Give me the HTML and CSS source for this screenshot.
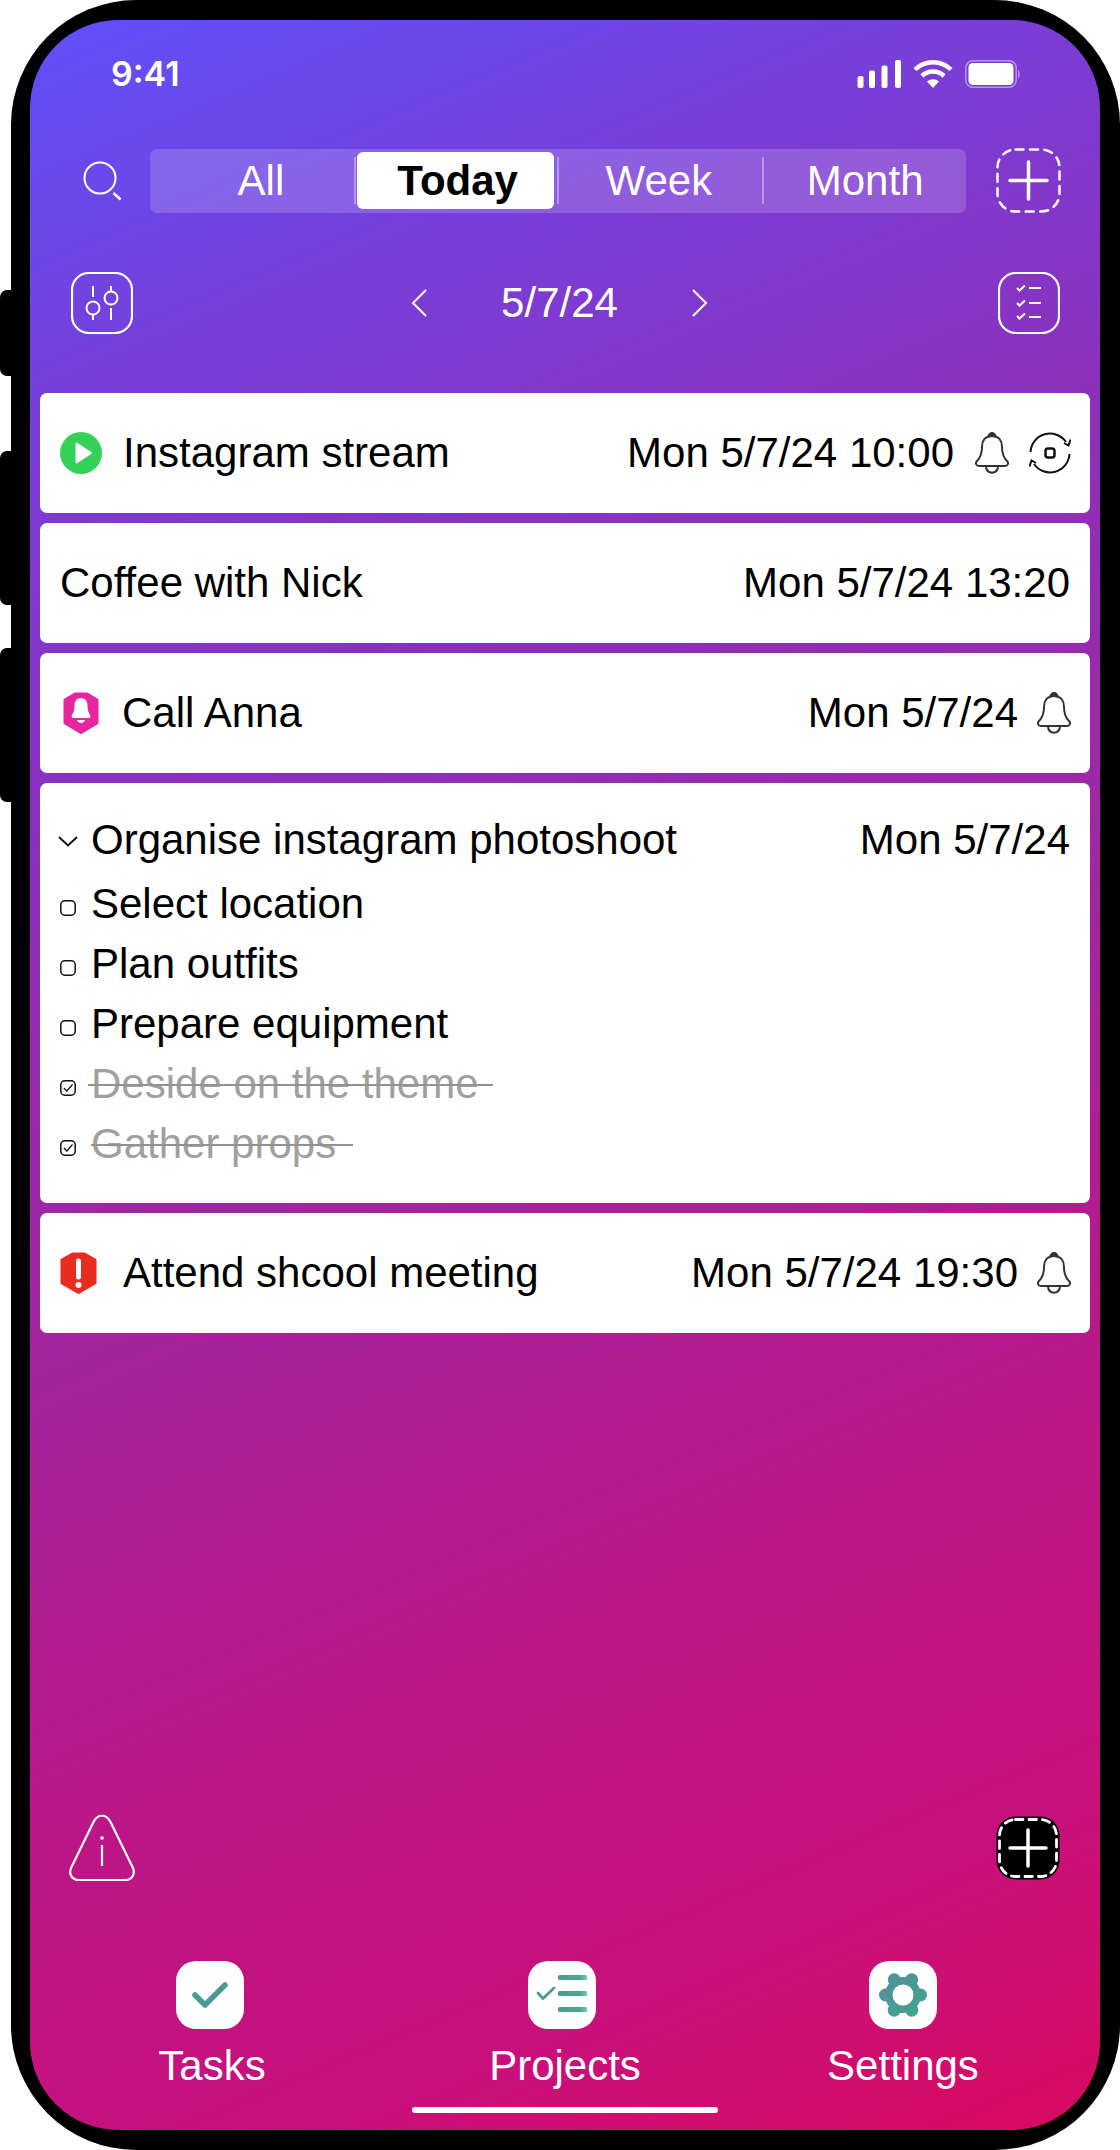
FILE: index.html
```html
<!DOCTYPE html>
<html lang="en">
<head>
  <meta charset="UTF-8" />
  <title>Tasks</title>
  <link rel="stylesheet" href="styles.css">
</head>
<body>
  <svg class="defs" width="0" height="0">
    <defs>
      <symbol id="bell" viewBox="0 0 34 42">
        <path d="M17 4C10 4 7 9 7 15C7 23 5 26 2 29C0 31 1 34 4 34H30C33 34 34 31 32 29C29 26 27 23 27 15C27 9 24 4 17 4Z" fill="none" stroke="#333" stroke-width="2"/>
        <path d="M11.5 6C13 1.500 15 0 17 0C19 0 21 1.500 22.500 6C20 4.500 14 4.500 11.500 6Z" fill="#333"/>
        <path d="M11 35C12 42.500 22 42.500 23 35" fill="none" stroke="#333" stroke-width="2"/>
      </symbol>
      <symbol id="box" viewBox="0 0 16 16">
        <rect x="0.8" y="0.8" width="14.4" height="14.4" rx="4" fill="#fff" stroke="#111" stroke-width="1.5"/>
      </symbol>
      <symbol id="box-done" viewBox="0 0 16 16">
        <rect x="0.8" y="0.8" width="14.4" height="14.4" rx="4" fill="#fff" stroke="#111" stroke-width="1.5"/>
        <path d="M3.800 8L6.800 11L12.500 4.500" fill="none" stroke="#111" stroke-width="1.200"/>
      </symbol>
    </defs>
  </svg>

  <span class="side-btn side-btn-a"></span>
  <span class="side-btn side-btn-b"></span>
  <span class="side-btn side-btn-c"></span>

  <div class="phone">
    <div class="screen">

      <div class="status">
        <span class="time">9:41</span>
        <div class="status-icons">
          <svg width="44" height="28" viewBox="0 0 44 28" fill="#fff">
            <rect x="0.500" y="16" width="6" height="12" rx="2"/>
            <rect x="12" y="10.500" width="6" height="17.500" rx="2"/>
            <rect x="24.500" y="5.500" width="6" height="22.500" rx="2"/>
            <rect x="38" y="0" width="6" height="28" rx="2"/>
          </svg>
          <svg width="40" height="28" viewBox="0 0 40 28">
            <path d="M2 9.500A26 26 0 0 1 38 9.500" fill="none" stroke="#fff" stroke-width="4.500"/>
            <path d="M9 16A16 16 0 0 1 31 16" fill="none" stroke="#fff" stroke-width="4.500"/>
            <path d="M14 21.500A9 9 0 0 1 26 21.500L20 28Z" fill="#fff"/>
          </svg>
          <svg width="56" height="28" viewBox="0 0 56 28">
            <rect x="0.800" y="0.800" width="50.400" height="26.400" rx="7" fill="none" stroke="#fff" stroke-opacity="0.45" stroke-width="1.500"/>
            <rect x="3.500" y="3" width="45" height="22" rx="4.500" fill="#fff"/>
            <path d="M53 10C55 11 55.500 17 53 18Z" fill="#fff" fill-opacity="0.45"/>
          </svg>
        </div>
      </div>

      <div class="toolbar">
        <svg class="search-icon" width="40" height="40" viewBox="0 0 40 40" fill="none" stroke="#fff">
          <circle cx="17" cy="17" r="15.500" stroke-width="2"/>
          <path d="M30.500 32L37.500 38.500" stroke-width="2.500"/>
        </svg>
        <div class="segments">
          <span class="segment segment-all">All</span>
          <i class="seg-divider"></i>
          <span class="segment segment-today">Today</span>
          <i class="seg-divider"></i>
          <span class="segment segment-week">Week</span>
          <i class="seg-divider"></i>
          <span class="segment segment-month">Month</span>
        </div>
        <svg class="add-icon" width="65" height="65" viewBox="0 0 65 65" fill="none" stroke="#fff" stroke-linecap="round">
          <rect x="1.500" y="1.500" width="62" height="62" rx="18" stroke-width="2.500" stroke-dasharray="8 6.500"/>
          <path d="M32.500 14V51M14 32.500H51" stroke-width="3.500"/>
        </svg>
      </div>

      <div class="datebar">
        <svg width="62" height="62" viewBox="0 0 62 62" fill="none" stroke="#fff" stroke-width="2">
          <rect x="1" y="1" width="60" height="60" rx="17" stroke-width="2.200"/>
          <path d="M22 14V25M22 43V48M40 14V19M40 36V48"/>
          <circle cx="22" cy="36" r="6.500"/>
          <circle cx="40" cy="26" r="6.500"/>
        </svg>
        <div class="date-nav">
          <svg width="16" height="28" viewBox="0 0 16 28" fill="none" stroke="#fff" stroke-width="2"><path d="M15 1L2 14L15 27"/></svg>
          <span class="date">5/7/24</span>
          <svg width="16" height="28" viewBox="0 0 16 28" fill="none" stroke="#fff" stroke-width="2"><path d="M1 1L14 14L1 27"/></svg>
        </div>
        <svg width="62" height="62" viewBox="0 0 62 62" fill="none" stroke="#fff" stroke-width="2">
          <rect x="1" y="1" width="60" height="60" rx="17" stroke-width="2.200"/>
          <path d="M19 16L21.500 18.500L27 13.500M19 31L21.500 33.500L27 28.500M19 44L21.500 46.500L27 41.500"/>
          <path d="M31 16H43M31 31H43M31 45H43"/>
        </svg>
      </div>

      <div class="list">
        <div class="card">
          <svg class="lead-icon lead-play" width="42" height="42" viewBox="0 0 42 42">
            <circle cx="21" cy="21" r="21" fill="#34d158"/>
            <path d="M16.500 11.500L31 21L16.500 30.500Z" fill="#fff" stroke="#fff" stroke-width="2" stroke-linejoin="round"/>
          </svg>
          <span class="title">Instagram stream</span>
          <span class="when">Mon 5/7/24 10:00</span>
          <svg class="bell" width="34" height="42"><use href="#bell"/></svg>
          <svg class="repeat" width="42" height="42" viewBox="0 0 42 42" fill="none" stroke="#111" stroke-width="2">
            <path d="M1.500 20A19.500 19.500 0 0 1 37 10"/>
            <path d="M41.500 7.500L39.500 13.500L35 11"/>
            <path d="M40.500 22A19.500 19.500 0 0 1 5 32"/>
            <path d="M0.500 34.500L2.500 28.500L7 31"/>
            <rect x="16.500" y="16.500" width="9" height="9" rx="2.500" stroke-width="2.500"/>
          </svg>
        </div>

        <div class="card">
          <span class="title">Coffee with Nick</span>
          <span class="when">Mon 5/7/24 13:20</span>
        </div>

        <div class="card">
          <svg class="lead-icon lead-hex" width="36" height="42" viewBox="0 0 36 42">
            <path d="M12 2H24L34 8V31L18 40.500L2 31V8Z" fill="#e6259f" stroke="#e6259f" stroke-width="3" stroke-linejoin="round"/>
            <path d="M18 6C13 6 11.500 10 11.500 14C11.500 19 10 21 9 23C8 25 9 26 11 26H25C27 26 28 25 27 23C26 21 24.500 19 24.500 14C24.500 10 23 6 18 6Z" fill="#fff"/>
            <path d="M14 28H22C21 32 15 32 14 28Z" fill="#fff"/>
          </svg>
          <span class="title">Call Anna</span>
          <span class="when">Mon 5/7/24</span>
          <svg class="bell" width="34" height="42"><use href="#bell"/></svg>
        </div>

        <div class="card card-project">
          <div class="project-head">
            <svg class="chevron" width="20" height="11" viewBox="0 0 20 11" fill="none" stroke="#111" stroke-width="1.800"><path d="M1 1L10 9.500L19 1"/></svg>
            <span class="title">Organise instagram photoshoot</span>
            <span class="when">Mon 5/7/24</span>
          </div>
          <div class="subtask"><svg width="16" height="16"><use href="#box"/></svg><span>Select location</span></div>
          <div class="subtask"><svg width="16" height="16"><use href="#box"/></svg><span>Plan outfits</span></div>
          <div class="subtask"><svg width="16" height="16"><use href="#box"/></svg><span>Prepare equipment</span></div>
          <div class="subtask done"><svg width="16" height="16"><use href="#box-done"/></svg><span class="strike strike-a">Deside on the theme</span></div>
          <div class="subtask done"><svg width="16" height="16"><use href="#box-done"/></svg><span class="strike strike-b">Gather props</span></div>
        </div>

        <div class="card">
          <svg class="lead-icon lead-alert" width="37" height="42" viewBox="0 0 37 42">
            <path d="M12.500 2H24.500L35 8V31L18.500 40.500L2 31V8Z" fill="#ea2b1f" stroke="#ea2b1f" stroke-width="3" stroke-linejoin="round"/>
            <path d="M18.500 9V25" stroke="#fff" stroke-width="5" stroke-linecap="round"/>
            <circle cx="18.500" cy="33" r="3" fill="#fff"/>
          </svg>
          <span class="title">Attend shcool meeting</span>
          <span class="when">Mon 5/7/24 19:30</span>
          <svg class="bell" width="34" height="42"><use href="#bell"/></svg>
        </div>
      </div>

      <div class="actions">
        <svg width="68" height="68" viewBox="0 0 68 68" fill="none" stroke="#fff" stroke-width="2.200">
          <path d="M26 7C30 0 38 0 42 7L64.500 53C68 60 64 66 57 66H11C4 66 0 60 3.500 53Z"/>
          <path d="M34 31V52"/>
          <circle cx="34" cy="24" r="1.800" fill="#fff" stroke="none"/>
        </svg>
        <svg width="64" height="64" viewBox="0 0 64 64" stroke-linecap="round">
          <rect x="0.500" y="0.500" width="63" height="63" rx="19" fill="#000"/>
          <rect x="3.500" y="3.500" width="57" height="57" rx="16" fill="none" stroke="#fff" stroke-width="2.800" stroke-dasharray="7.500 6"/>
          <path d="M32 14V50M14 32H50" fill="none" stroke="#fff" stroke-width="3.500"/>
        </svg>
      </div>

      <div class="tabbar">
        <div class="tab">
          <div class="tab-icon">
            <svg width="36" height="26" viewBox="0 0 36 26" fill="none" stroke="#4a9a94" stroke-width="5.500" stroke-linecap="round" stroke-linejoin="round"><path d="M3 13L13 23L33 3"/></svg>
          </div>
          <span>Tasks</span>
        </div>
        <div class="tab tab-projects">
          <div class="tab-icon">
            <svg width="68" height="68" viewBox="0 0 68 68">
              <defs>
                <linearGradient id="bars" x1="30" x2="60" y1="0" y2="0" gradientUnits="userSpaceOnUse">
                  <stop offset="0" stop-color="#459a90"/>
                  <stop offset="0.7" stop-color="#4ba596"/>
                  <stop offset="1" stop-color="#6cc9b2"/>
                </linearGradient>
              </defs>
              <path d="M10 32L15 37.500L26 27" fill="none" stroke="#4a9a94" stroke-width="2.800" stroke-linecap="round" stroke-linejoin="round"/>
              <rect x="30" y="14" width="29" height="5" rx="1.500" fill="url(#bars)"/>
              <rect x="30" y="30" width="29" height="5" rx="1.500" fill="url(#bars)"/>
              <rect x="30" y="46" width="29" height="5" rx="1.500" fill="url(#bars)"/>
            </svg>
          </div>
          <span>Projects</span>
        </div>
        <div class="tab">
          <div class="tab-icon">
            <svg width="50" height="50" viewBox="0 0 50 50">
              <defs>
                <linearGradient id="gear" x1="5" y1="3" x2="42" y2="48" gradientUnits="userSpaceOnUse">
                  <stop offset="0" stop-color="#568c9e"/>
                  <stop offset="1" stop-color="#3fa78d"/>
                </linearGradient>
              </defs>
              <g fill="url(#gear)">
                <circle cx="25" cy="25" r="18"/>
                <circle cx="42.500" cy="25" r="6.500"/>
                <circle cx="7.500" cy="25" r="6.500"/>
                <circle cx="33.750" cy="9.800" r="6.500"/>
                <circle cx="16.250" cy="9.800" r="6.500"/>
                <circle cx="33.750" cy="40.200" r="6.500"/>
                <circle cx="16.250" cy="40.200" r="6.500"/>
              </g>
              <circle cx="25" cy="25" r="10.500" fill="#fff"/>
            </svg>
          </div>
          <span>Settings</span>
        </div>
      </div>

      <div class="home-bar"></div>
    </div>
  </div>
</body>
</html>
```

FILE: styles.css
```css
body {
  margin: 0;
  background: #fff;
  font-family: 'Liberation Sans', Arial, sans-serif;
  overflow: hidden;
}

.defs {
  position: absolute;
}

.side-btn {
  position: absolute;
  left: 0;
  width: 14px;
  background: #000;
  border-radius: 7px 0 0 7px;
}

.side-btn-a {
  top: 290px;
  height: 86px;
}

.side-btn-b {
  top: 451px;
  height: 154px;
}

.side-btn-c {
  top: 648px;
  height: 154px;
}

.phone {
  box-sizing: border-box;
  margin-left: 11px;
  width: 1109px;
  height: 2150px;
  padding: 20px 20px 20px 19px;
  background: #000;
  border-radius: 125px;
}

.screen {
  box-sizing: border-box;
  display: flex;
  flex-direction: column;
  height: 2110px;
  padding: 0 10px;
  border-radius: 88px;
  color: #fff;
  background: linear-gradient(157deg, #5f50f9 0%, #7a3dd6 17%, #8c30bc 32%, #a3259f 52%, #bb1686 72%, #c9107a 88%, #d80a60 100%);
}

/* status bar */
.status {
  display: flex;
  justify-content: space-between;
  height: 48px;
  padding: 40px 69px 0 71px;
  margin-bottom: 40px;
}

.time {
  font-family: Inter, sans-serif;
  font-size: 34px;
  font-weight: 600;
  line-height: 28px;
}

.status-icons {
  display: flex;
  gap: 12px;
  align-items: flex-start;
}

/* top controls */
.toolbar {
  display: flex;
  align-items: center;
  height: 65px;
  margin-left: 43px;
}

.search-icon {
  margin-right: 27px;
}

.segments {
  display: flex;
  align-items: center;
  width: 816px;
  height: 64px;
  background: rgba(255, 255, 255, 0.17);
  border-radius: 7px;
  font-size: 42px;
  text-align: center;
}

.segment {
  line-height: 57px;
}

.segment-all {
  width: 186px;
  padding-left: 18px;
}

.segment-today {
  width: 197px;
  margin: 0 3px 0 1px;
  background: #fff;
  color: #000;
  font-weight: bold;
  border-radius: 6px;
  text-indent: 5px;
}

.segment-week {
  width: 204px;
  text-indent: -3px;
}

.segment-month {
  width: 202px;
}

.seg-divider {
  width: 2px;
  height: 47px;
  background: rgba(255, 255, 255, 0.35);
}

.add-icon {
  margin-left: 30px;
}

.datebar {
  display: flex;
  align-items: center;
  justify-content: space-between;
  height: 62px;
  margin: 59px 30px 0 31px;
}

.date-nav {
  display: flex;
  align-items: center;
  gap: 74px;
  margin-right: 12px;
  font-size: 42px;
}

/* task cards */
.list {
  display: flex;
  flex-direction: column;
  gap: 10px;
  margin-top: 59px;
}

.card {
  box-sizing: border-box;
  display: flex;
  align-items: center;
  min-height: 120px;
  padding: 0 20px;
  background: #fff;
  color: #000;
  border-radius: 7px;
  font-size: 42px;
  line-height: 48px;
}

.lead-play {
  margin-right: 21px;
}

.lead-hex {
  margin: 0 23px 0 3px;
}

.lead-alert {
  margin-right: 26px;
}

.when {
  margin-left: auto;
}

.bell {
  margin-left: 19px;
  margin-right: -1px;
}

.card .bell:has(+ .repeat) {
  margin-left: 21px;
  margin-right: 0;
}

.repeat {
  margin-left: 20px;
  margin-right: -1px;
}

.card-project {
  display: block;
  padding-top: 33px;
  padding-bottom: 29px;
}

.project-head {
  display: flex;
  align-items: center;
  margin-bottom: 10px;
}

.chevron {
  margin: 2px 13px 0 -2px;
}

.subtask {
  display: flex;
  align-items: center;
  gap: 15px;
  height: 60px;
}

.subtask svg {
  margin-top: 8px;
}

.subtask.done {
  color: #a0a0a0;
}

.strike {
  position: relative;
}

.strike::after {
  content: "";
  position: absolute;
  top: 50%;
  height: 2px;
  background: #929292;
}

.strike-a::after {
  left: -3px;
  right: -14px;
}

.strike-b::after {
  left: 0;
  right: -17px;
}

/* bottom area */
.actions {
  display: flex;
  align-items: center;
  justify-content: space-between;
  margin: auto 30px 0 28px;
}

.tabbar {
  display: grid;
  grid-template-columns: 355px 338px 200px;
  margin-top: 79px;
  padding-left: 70px;
}

.tab {
  display: flex;
  flex-direction: column;
  align-items: center;
  width: 200px;
  font-size: 42px;
  line-height: 48px;
}

.tab:first-child span {
  margin-left: 4px;
}

.tab-icon {
  display: flex;
  align-items: center;
  justify-content: center;
  width: 68px;
  height: 68px;
  margin-bottom: 13px;
  background: #fff;
  border-radius: 20px;
}

.tab-projects .tab-icon {
  margin-right: 7px;
}

.home-bar {
  align-self: center;
  width: 306px;
  height: 6px;
  margin: 17px 0 17px;
  background: #fff;
  border-radius: 3px;
}
```
